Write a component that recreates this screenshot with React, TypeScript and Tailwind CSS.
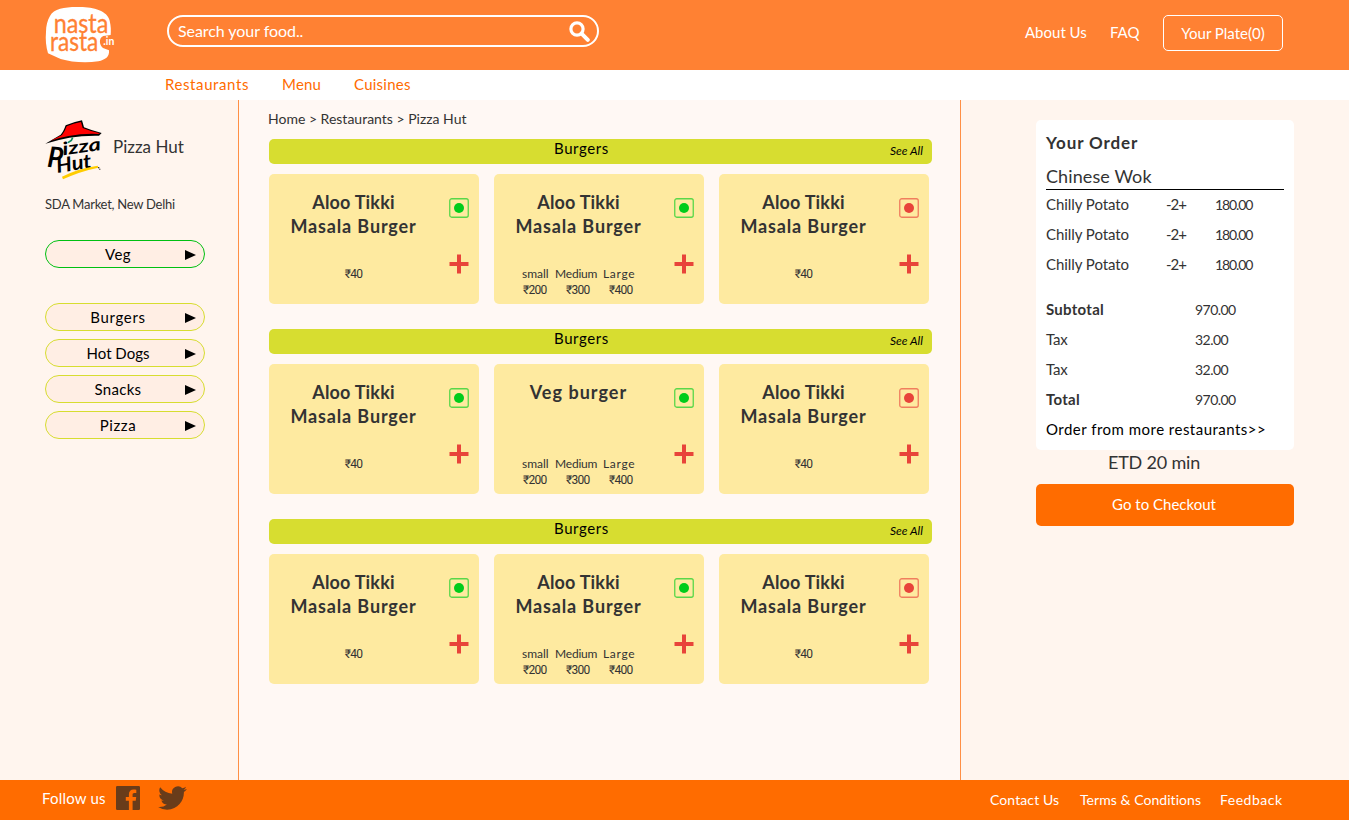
import type { ReactNode } from "react";

type Dish = { name: string[]; veg: boolean; sizes?: boolean };

const aloo = ["Aloo Tikki", "Masala Burger"];

const sections: Dish[][] = [
  [
    { name: aloo, veg: true },
    { name: aloo, veg: true, sizes: true },
    { name: aloo, veg: false },
  ],
  [
    { name: aloo, veg: true },
    { name: ["Veg burger"], veg: true, sizes: true },
    { name: aloo, veg: false },
  ],
  [
    { name: aloo, veg: true },
    { name: aloo, veg: true, sizes: true },
    { name: aloo, veg: false },
  ],
];

const titleTracking: Record<string, string> = {
  "Aloo Tikki": "tracking-[0.2px]",
  "Masala Burger": "tracking-[0.86px]",
  "Veg burger": "tracking-[1.02px]",
};

function NastaLogo() {
  return (
    <svg viewBox="45 18 210 174" className="h-[58px] w-[70px]" role="img">
      <path
        d="M60 48 C72 24 110 20 150 21 C192 22 232 32 239 62 C243 78 243 92 242 105 L220 108 C205 114 208 136 219 144 L237 151 C239 170 226 180 205 184 C165 190 122 186 92 177 L54 160 C48 140 46 118 48 96 C48 78 52 62 60 48Z"
        fill="#fff"
      />
      <g fill="#ff8133" fontFamily="Lato, sans-serif" stroke="#ff8133" strokeWidth="1">
        <text x="71" y="98" fontSize="78" textLength="164" lengthAdjust="spacingAndGlyphs">
          nasta
        </text>
        <text x="60" y="152" fontSize="78" textLength="145" lengthAdjust="spacingAndGlyphs">
          rasta
        </text>
      </g>
      <text x="220" y="135" fontSize="31" fontWeight="700" fill="#fff" fontFamily="Lato, sans-serif" textLength="33" lengthAdjust="spacingAndGlyphs">
        .in
      </text>
    </svg>
  );
}

function PizzaHutLogo() {
  return (
    <svg viewBox="45 57 174 183" className="h-[61px] w-[58px]" role="img">
      <path d="M46 131 L92 104 Q100 96 107 76 Q130 66 156 61 L162 82 Q186 92 215 99 L207 107 Q160 106 118 113 Q80 120 46 131Z" fill="#000" />
      <path d="M62 122 L96 105 Q104 96 110 79 Q130 70 153 66 L158 84 Q182 94 210 100 L204 102 Q160 100 116 108 Q84 114 62 122Z" fill="#f00" />
      <path d="M128 113 L124 121 L114 128" stroke="#0a8a5c" strokeWidth="5" fill="none" />
      <g fontFamily="Lato, sans-serif" fontStyle="italic" fontWeight="700" fill="#000">
        <text x="50" y="200" fontSize="86" textLength="46" lengthAdjust="spacingAndGlyphs" transform="rotate(5 50 200)">
          P
        </text>
        <text x="100" y="166" fontSize="54" textLength="116" lengthAdjust="spacingAndGlyphs" transform="rotate(-8 100 166)">
          izza
        </text>
        <text x="82" y="219" fontSize="60" textLength="106" lengthAdjust="spacingAndGlyphs" transform="rotate(-9 82 219)">
          Hut
        </text>
      </g>
      <path d="M96 230 Q145 205 203 197 L205 203 Q150 214 99 238Z" fill="#fc0" />
      <path d="M204 202h4v3h-4zM208 206h3v3h-3z" fill="#000" />
    </svg>
  );
}

function Arrow() {
  return (
    <svg viewBox="0 0 11 10" className="mt-0.5 mr-2 h-[10px] w-[11px]">
      <path d="M0 0 L11 5 L0 10Z" fill="#000" />
    </svg>
  );
}

function Pill({ children, border }: { children: ReactNode; border: string }) {
  return (
    <button className={`flex h-7 w-40 items-center rounded-[14px] border bg-[#ffeee4] text-[15px] text-black ${border}`}>
      <span className="flex-1 pt-px pl-[5px] text-center">{children}</span>
      <Arrow />
    </button>
  );
}

function DietMark({ veg }: { veg: boolean }) {
  const color = veg ? "#00cc1b" : "#e8443a";
  return (
    <svg viewBox="0 0 20 20" className="h-5 w-5">
      <rect x="0.75" y="0.75" width="18.5" height="18.5" rx="2" fill="none" stroke={color} strokeOpacity="0.65" strokeWidth="1.3" />
      <circle cx="10" cy="10" r="5" fill={color} />
    </svg>
  );
}

function DishCard({ dish }: { dish: Dish }) {
  return (
    <article className="flex h-[130px] w-[210px] rounded-[5px] bg-[#feeaa0]">
      <div className="flex w-[169px] flex-col pt-4">
        <h3 className="h-[76px] text-center text-[18px] leading-6 font-bold">
          {dish.name.map((line) => (
            <span key={line} className={`block ${titleTracking[line]}`}>
              {line}
            </span>
          ))}
        </h3>
        {dish.sizes ? (
          <div className="pl-[28px] text-[12px] leading-4">
            <div className="flex">
              <span className="w-[33px]">small</span>
              <span className="w-[48px] tracking-[-0.2px]">Medium</span>
              <span className="tracking-[0.7px]">Large</span>
            </div>
            <div className="flex pl-px font-['Roboto','Lato',sans-serif] text-[12px] tracking-[-0.75px]">
              <span className="w-[43px]">₹200</span>
              <span className="w-[43px]">₹300</span>
              <span>₹400</span>
            </div>
          </div>
        ) : (
          <div className="text-center font-['Roboto','Lato',sans-serif] text-[12px] leading-4 tracking-[-0.7px]">₹40</div>
        )}
      </div>
      <div className="ml-[11px] flex flex-col pt-6">
        <DietMark veg={dish.veg} />
        <svg viewBox="0 0 20 20" className="mt-9 h-5 w-5">
          <path d="M10 0.5V19.5M0.5 10H19.5" stroke="#e8443a" strokeWidth="4" />
        </svg>
      </div>
    </article>
  );
}

function OrderRow() {
  return (
    <div className="flex h-[30px] leading-[28px]">
      <span className="w-[120px] tracking-[-0.06px]">Chilly Potato</span>
      <span className="w-[49px] tracking-[-1px]">-2+</span>
      <span className="text-[14px] leading-[29px] tracking-[-1.1px]">180.00</span>
    </div>
  );
}

function TotalRow({ label, value, bold }: { label: string; value: string; bold?: boolean }) {
  return (
    <div className="flex h-[30px] leading-[28px]">
      <span className={bold ? "w-[149px] font-bold tracking-[0.28px]" : "w-[149px] tracking-[-0.2px]"}>{label}</span>
      <span className="text-[14px] leading-[29px] tracking-[-0.55px]">{value}</span>
    </div>
  );
}

export default function App() {
  return (
    <div className="flex h-[820px] w-[1349px] flex-col overflow-hidden bg-[#fff5ee] font-['Lato','Noto_Sans',sans-serif] text-[#333]">
      <header className="flex h-[70px] shrink-0 bg-[#ff8133] pl-[45px] text-[15px] text-white">
        <div className="mt-1.5 w-[122px]">
          <NastaLogo />
        </div>
        <div className="mt-[15px] flex h-8 w-[432px] items-center justify-between rounded-full border-2 border-white pr-[7px] pl-[9px]">
          <span className="text-[16px] tracking-[-0.06px]">Search your food..</span>
          <svg viewBox="0 0 21 21" className="h-[21px] w-[21px]">
            <circle cx="8" cy="8" r="6.1" fill="none" stroke="#fff" strokeWidth="3.2" />
            <path d="M12.6 12.6L18.8 18.8" stroke="#fff" strokeWidth="4" strokeLinecap="round" />
          </svg>
        </div>
        <nav className="ml-auto flex pr-[66px]">
          <a className="mt-[22px] w-[85px] leading-5">About Us</a>
          <a className="mt-[22px] w-[53px] leading-5">FAQ</a>
          <a className="mt-[15px] flex h-9 w-[120px] items-center justify-center rounded-[5px] border border-white">
            Your Plate(0)
          </a>
        </nav>
      </header>

      <nav className="flex h-[30px] shrink-0 bg-white pl-[165px] text-[15px] leading-[29px] text-[#ff6c00]">
        <a className="w-[117px] tracking-[0.6px]">Restaurants</a>
        <a className="w-[72px] tracking-[0.2px]">Menu</a>
        <a className="tracking-[0.25px]">Cuisines</a>
      </nav>

      <main className="flex h-[680px] shrink-0">
        <aside className="w-[238px] pt-[19px] pl-[45px]">
          <div className="flex">
            <PizzaHutLogo />
            <h1 className="mt-[17px] ml-[10px] text-[17px] leading-[22px]">Pizza Hut</h1>
          </div>
          <p className="mt-[14px] text-[13px] leading-5 tracking-[-0.26px]">SDA Market, New Delhi</p>
          <div className="mt-[26px]">
            <Pill border="border-[#00c011]">
              <span className="tracking-[0.5px]">Veg</span>
            </Pill>
          </div>
          <div className="mt-[35px] flex flex-col gap-2">
            <Pill border="border-[#d7dd30]">
              <span className="tracking-[0.7px]">Burgers</span>
            </Pill>
            <Pill border="border-[#d7dd30]">
              <span className="tracking-[0px]">Hot Dogs</span>
            </Pill>
            <Pill border="border-[#d7dd30]">
              <span className="tracking-[0.28px]">Snacks</span>
            </Pill>
            <Pill border="border-[#d7dd30]">
              <span className="tracking-[0.6px]">Pizza</span>
            </Pill>
          </div>
        </aside>

        <section className="w-[723px] border-x border-[#ff8f45] bg-[#fff8f4] pl-[30px]">
          <div className="-ml-px h-[39px] text-[14px] leading-[38px]">Home &gt; Restaurants &gt; Pizza Hut</div>
          {sections.map((dishes, i) => (
            <div key={i} className="h-[190px]">
              <div className="flex h-[25px] w-[663px] rounded-[5px] bg-[#d7dd30] text-black">
                <h2 className="ml-[285px] flex-1 text-[15px] leading-[19px] tracking-[0.6px]">Burgers</h2>
                <a className="mr-[9px] text-[12px] leading-[23px] italic">See All</a>
              </div>
              <div className="mt-[10px] flex gap-[15px]">
                {dishes.map((dish, j) => (
                  <DishCard key={j} dish={dish} />
                ))}
              </div>
            </div>
          ))}
        </section>

        <aside className="pt-5 pl-[75px] text-[15px]">
          <div className="h-[330px] w-[258px] rounded-[5px] bg-white px-[10px]">
            <h2 className="h-10 pt-3 text-[17px] leading-[21px] font-bold tracking-[0.9px]">Your Order</h2>
            <h3 className="h-[30px] border-b border-black text-[18px] leading-[32px] tracking-[0.1px]">Chinese Wok</h3>
            <OrderRow />
            <OrderRow />
            <OrderRow />
            <div className="mt-[15px]">
              <TotalRow label="Subtotal" value="970.00" bold />
              <TotalRow label="Tax" value="32.00" />
              <TotalRow label="Tax" value="32.00" />
              <TotalRow label="Total" value="970.00" bold />
            </div>
            <a className="block leading-[28px] tracking-[0.48px] whitespace-nowrap text-black">Order from more restaurants&gt;&gt;</a>
          </div>
          <p className="h-[34px] pl-[72px] text-[18px] leading-[25px] tracking-[-0.2px]">ETD 20 min</p>
          <button className="h-[42px] w-[258px] rounded-[5px] bg-[#ff6c00] pr-0.5 pb-0.5 text-center text-white">Go to Checkout</button>
        </aside>
      </main>

      <footer className="flex h-10 shrink-0 bg-[#ff6c00] text-white">
        <span className="ml-[42px] w-[74px] text-[15px] leading-[37px] tracking-[0.2px]">Follow us</span>
        <svg viewBox="0 0 24 24" className="mt-1.5 h-6 w-6">
          <path
            d="M1.3 0H22.7A1.3 1.3 0 0 1 24 1.3V22.7A1.3 1.3 0 0 1 22.7 24H16.6V14.7H19.7L20.2 11.1H16.6V8.8C16.6 7.7 16.9 7 18.4 7H20.3V3.8C20 3.7 18.8 3.6 17.5 3.6C14.8 3.6 12.9 5.3 12.9 8.4V11.1H9.8V14.7H12.9V24H1.3A1.3 1.3 0 0 1 0 22.7V1.3A1.3 1.3 0 0 1 1.3 0Z"
            fill="#693c1a"
          />
        </svg>
        <svg viewBox="0 2 24 20" className="mt-1.5 ml-[18px] h-6 w-[29px]">
          <path
            d="M24 4.6a10 10 0 0 1-2.8.8 4.9 4.9 0 0 0 2.1-2.7 9.9 9.9 0 0 1-3.1 1.2 4.9 4.9 0 0 0-8.4 4.5A14 14 0 0 1 1.7 3.1a4.9 4.9 0 0 0 1.5 6.6 4.9 4.9 0 0 1-2.2-.6v.1a4.9 4.9 0 0 0 3.9 4.8 5 5 0 0 1-2.2.1 4.9 4.9 0 0 0 4.6 3.4A9.9 9.9 0 0 1 0 19.500a14 14 0 0 0 7.5 2.2c9.1 0 14-7.5 14-14v-.6A10 10 0 0 0 24 4.6z"
            fill="#693c1a"
          />
        </svg>
        <nav className="ml-auto flex w-[359px] text-[14px] leading-10">
          <a className="w-[90px] tracking-[0.1px]">Contact Us</a>
          <a className="w-[140px] tracking-[0.05px]">Terms &amp; Conditions</a>
          <a className="tracking-[0.5px]">Feedback</a>
        </nav>
      </footer>
    </div>
  );
}
